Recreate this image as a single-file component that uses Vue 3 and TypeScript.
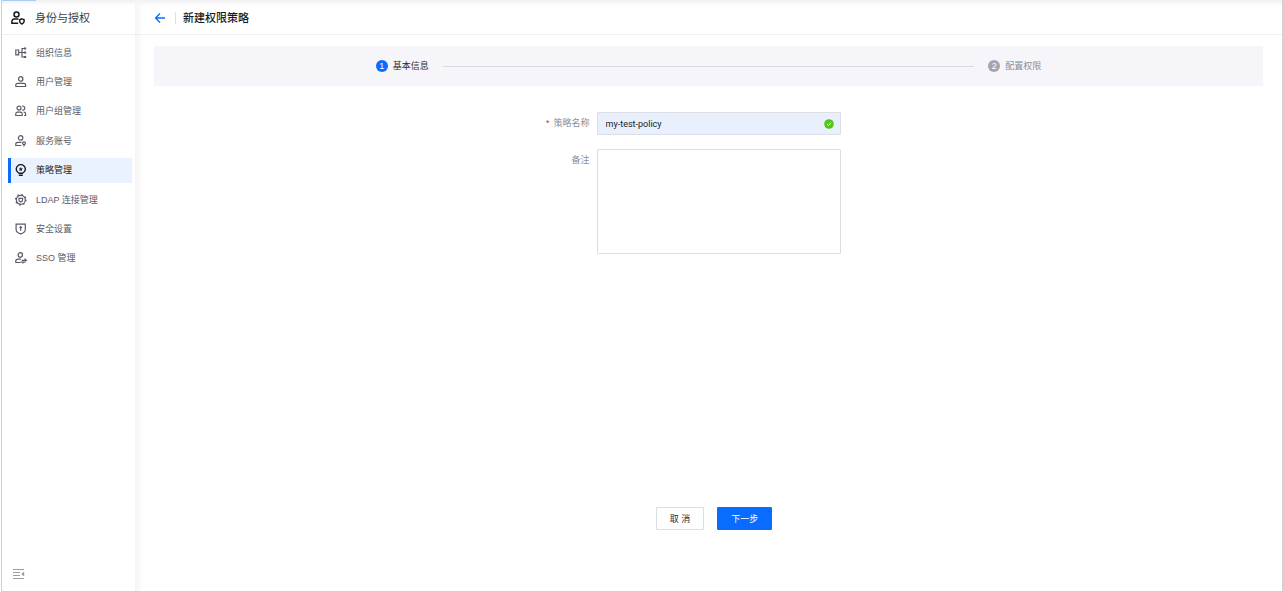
<script setup lang="ts">
import { ref } from 'vue'

interface NavItem {
  key: string
  label: string
}

const items: NavItem[] = [
  { key: 'org', label: '组织信息' },
  { key: 'user', label: '用户管理' },
  { key: 'group', label: '用户组管理' },
  { key: 'service', label: '服务账号' },
  { key: 'policy', label: '策略管理' },
  { key: 'ldap', label: 'LDAP 连接管理' },
  { key: 'security', label: '安全设置' },
  { key: 'sso', label: 'SSO 管理' },
]

const active = ref('policy')
const policyName = ref('my-test-policy')
const remark = ref('')
</script>

<template>
  <div class="frame">
    <aside class="sidebar">
      <span class="loading-bar"></span>
      <div class="brand">
        <svg class="brand-icon" viewBox="0 0 14 14" aria-hidden="true">
          <circle cx="5.5" cy="3.4" r="2.5" />
          <path d="M7.500 8H3.400C1.800 8 .9 9.100.9 10.400v1.900h6.300" />
          <path d="M10.900 7.900l2.200.8v1.500c0 1.300-.8 2.200-2.200 2.800-1.400-.6-2.200-1.500-2.200-2.800V8.700z" />
        </svg>
        <span>身份与授权</span>
      </div>
      <nav class="nav">
        <a
          v-for="item in items"
          :key="item.key"
          href="#"
          class="nav-item"
          :class="{ active: item.key === active }"
          @click.prevent="active = item.key"
        >
          <svg class="nav-icon" viewBox="0 0 12 12" aria-hidden="true">
            <template v-if="item.key === 'org'">
              <path d="M.8 3h2.900v4.800H.8zM3.700 5.500h7.300M10.900 1.500H7v8.500h3.900" />
              <path d="M8.800 1.500h2.400M8.800 5.500h2.400M8.800 10h2.400" stroke-width="2" />
            </template>
            <template v-else-if="item.key === 'user'">
              <circle cx="5.700" cy="2.900" r="2.200" />
              <path d="M.8 10.500V9.100C.8 7.900 1.700 7.300 2.900 7.300h5.600c1.200 0 2.100.6 2.100 1.800v1.400z" />
            </template>
            <template v-else-if="item.key === 'group'">
              <circle cx="4" cy="3.100" r="2" />
              <path d="M.8 10.500V8.900c0-1.100.7-1.700 1.700-1.700h3c1 0 1.700.6 1.700 1.700v1.600z" />
              <path d="M7.200 1.200a2 2 0 1 1 0 3.800M8.700 7.200c1.300 0 1.900.7 1.900 1.800v1.500H9" />
            </template>
            <template v-else-if="item.key === 'service'">
              <circle cx="5.600" cy="2.900" r="2.200" />
              <path d="M6.500 7.300H3C1.700 7.300.8 7.900.8 9.100v1.400h5.400" />
              <circle cx="9" cy="8.300" r="1.400" />
              <path d="M9 9.700v1.800" />
            </template>
            <template v-else-if="item.key === 'policy'">
              <path d="M4 9.200a4.500 4.500 0 1 1 3.600 0zM3.800 11.200h4" />
              <path d="M5.800 3.100l.7 1.300 1.400.2-1 1 .2 1.400-1.300-.7-1.300.7.200-1.400-1-1 1.400-.2z" fill="currentColor" stroke="none" />
            </template>
            <template v-else-if="item.key === 'ldap'">
              <circle cx="5.800" cy="5.800" r="4.500" />
              <circle cx="5.800" cy="5.800" r="5.300" stroke-dasharray="1.400 2.763" />
              <path d="M4 4.300h3.600v1.600c0 1-.7 1.600-1.800 2.100C4.700 7.500 4 6.900 4 5.900z" />
            </template>
            <template v-else-if="item.key === 'security'">
              <path d="M1.100 1.200h9.200v5.200c0 2-1.500 3.400-4.600 4.500-3.100-1.100-4.600-2.500-4.600-4.500z" />
              <path d="M5.700 3.900v3.800M4.500 4.900l1.200-1.200 1.200 1.200" />
            </template>
            <template v-else>
              <circle cx="5.300" cy="2.900" r="2.200" />
              <path d="M6 7.200H3C1.700 7.200.8 7.900.8 9.100v1.400h4.900" />
              <path d="M6.800 8.300h4.400L9.600 6.800M11.200 10H6.800l1.600 1.400" />
            </template>
          </svg>
          <span>{{ item.label }}</span>
        </a>
      </nav>
      <button type="button" class="collapse" aria-label="收起菜单">
        <svg viewBox="0 0 12 12" aria-hidden="true">
          <path d="M0 1.500h11M0 4.500h7M0 7.500h7M0 10.500h11" />
          <path d="M11.200 3.400v5.200L8.200 6z" class="arrow" />
        </svg>
      </button>
    </aside>

    <main class="main">
      <header class="topbar">
        <button type="button" class="back" aria-label="返回">
          <svg viewBox="0 0 12 12" aria-hidden="true">
            <path d="M11 6H1.500M6 1.500L1.500 6 6 10.500" />
          </svg>
        </button>
        <span class="divider"></span>
        <h1>新建权限策略</h1>
      </header>

      <div class="content">
        <ol class="steps">
          <li class="step current" aria-current="step">
            <span class="num">1</span><span>基本信息</span>
          </li>
          <li class="line" aria-hidden="true"></li>
          <li class="step">
            <span class="num">2</span><span>配置权限</span>
          </li>
        </ol>

        <form class="form" @submit.prevent>
          <div class="fields">
            <label for="policy-name"><span class="required">*</span>策略名称</label>
            <div class="control">
              <input id="policy-name" v-model="policyName" type="text" required />
              <svg class="valid" viewBox="0 0 10 10" aria-hidden="true">
                <circle cx="5" cy="5" r="4.800" />
                <path d="M3 5l1.500 1.500L7.100 3.700" />
              </svg>
            </div>
            <label for="policy-remark">备注</label>
            <textarea id="policy-remark" v-model="remark"></textarea>
          </div>
          <div class="actions">
            <button type="button" class="btn">取 消</button>
            <button type="submit" class="btn primary">下一步</button>
          </div>
        </form>
      </div>
    </main>
  </div>
</template>

<style>
body {
  margin: 0;
}
</style>

<style scoped>
* {
  box-sizing: border-box;
}

.frame {
  display: flex;
  min-height: 100vh;
  margin-left: 1px;
  border: 1px solid #d0d0d0;
  border-top: 0;
  background: #fff linear-gradient(#f0f0f0, #fff 6px);
  color: #595b66;
  font: 9px/12px "Liberation Sans", "Noto Sans CJK SC", sans-serif;
}

button,
input,
textarea {
  font: inherit;
}

svg {
  display: block;
  fill: none;
  stroke: currentColor;
}

.sidebar {
  position: relative;
  display: flex;
  flex-direction: column;
  flex: 0 0 133px;
}

.loading-bar {
  position: absolute;
  top: 0;
  left: 0;
  width: 34px;
  height: 1px;
  background: #a9cbf5;
}

.brand {
  display: flex;
  align-items: center;
  gap: 10px;
  height: 35px;
  padding: 1px 0 0 9px;
  border-bottom: 1px solid #efeff1;
  color: #3a3c46;
  font-size: 11px;
  line-height: 16px;
}

.brand-icon {
  width: 14px;
  height: 14px;
  color: #17181f;
  stroke-width: 1.5;
}

.nav {
  display: flex;
  flex-direction: column;
  justify-content: space-between;
  min-height: 231px;
  margin-top: 5px;
  padding: 0 3px 0 6px;
}

.nav-item {
  display: flex;
  align-items: center;
  gap: 9px;
  height: 25px;
  padding-left: 4px;
  border-left: 3px solid transparent;
  color: #595b66;
  text-decoration: none;
}

.nav-item.active {
  border-color: #0a6cff;
  background: #eaf2ff;
  color: #191b23;
}

.nav-icon {
  width: 12px;
  height: 12px;
  stroke-width: 1.2;
}

.active .nav-icon {
  stroke-width: 1.4;
}

.collapse {
  width: 12px;
  height: 12px;
  margin: auto 0 11px 11px;
  padding: 0;
  border: 0;
  background: none;
  color: #9b9aa9;
}

.arrow {
  fill: currentColor;
  stroke: none;
}

.main {
  display: flex;
  flex: 1;
  flex-direction: column;
  min-width: 0;
  background: linear-gradient(90deg, #f5f5f5, rgb(255 255 255 / 0) 9px);
}

.topbar {
  display: flex;
  align-items: center;
  height: 35px;
  padding: 2px 0 0 19px;
  border-bottom: 1px solid #efeff1;
}

.back {
  width: 12px;
  height: 12px;
  padding: 0;
  border: 0;
  background: none;
  color: #0a6cff;
  stroke-width: 1.3;
}

.divider {
  width: 1px;
  height: 12px;
  margin: 0 7px 0 9px;
  background: #e0e0e5;
}

h1 {
  margin: 0;
  color: #191b23;
  font-size: 11px;
  font-weight: 500;
  line-height: 16px;
}

.content {
  display: flex;
  flex: 1;
  flex-direction: column;
  padding: 11px 19px 0;
}

.steps {
  display: flex;
  align-items: center;
  height: 40px;
  margin: 0;
  padding: 0 20%;
  background: #f5f5fa;
  list-style: none;
}

.step {
  display: flex;
  align-items: center;
  gap: 5px;
  color: #8b8d99;
}

.step.current {
  color: #2a2c36;
}

.num {
  width: 12px;
  height: 12px;
  border-radius: 50%;
  background: #a3a4b2;
  color: #fff;
  text-align: center;
}

.current .num {
  background: #0a6cff;
}

.line {
  flex: 1;
  height: 1px;
  margin: 0 14px;
  background: #d9d9df;
}

.form {
  display: flex;
  flex: 1;
  flex-direction: column;
}

.fields {
  display: grid;
  grid-template-columns: calc(40% - 1px) 22%;
  row-gap: 14px;
  padding-top: 26px;
}

label {
  padding: 5px 7px 0 0;
  color: #8b8d99;
  text-align: right;
}

.required {
  margin-right: 4px;
  color: #f5222d;
}

.control {
  position: relative;
}

input,
textarea {
  display: block;
  width: 100%;
  border: 1px solid #dcdde5;
  border-radius: 1px;
  outline: 0;
  color: #191b23;
}

input {
  height: 23px;
  padding: 0 24px 0 8px;
  background: #e8f0fe;
  font-family: Roboto, "Noto Sans CJK SC", sans-serif;
}

textarea {
  height: 105px;
  padding: 5px 8px;
  background: #fff;
  resize: none;
}

.valid {
  position: absolute;
  top: 7px;
  right: 7px;
  width: 10px;
  height: 10px;
  fill: #52c41a;
  stroke: none;
}

.valid path {
  fill: none;
  stroke: #fff;
}

.actions {
  display: flex;
  justify-content: center;
  gap: 13px;
  margin-top: auto;
  padding: 20px 0 61px 11px;
}

.btn {
  height: 23px;
  padding: 0 13px;
  border: 1px solid #dcdde5;
  border-radius: 1px;
  background: #fff;
  color: #2a2c36;
}

.primary {
  border-color: #0a6cff;
  background: #0a6cff;
  color: #fff;
}
</style>
